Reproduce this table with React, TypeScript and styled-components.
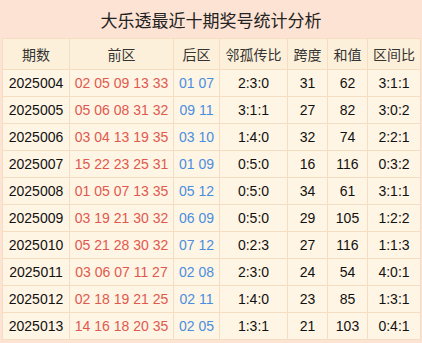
import styled, { createGlobalStyle } from "styled-components";

const GlobalStyle = createGlobalStyle`
  html, body {
    margin: 0;
    padding: 0;
    background: #fff;
  }
  body {
    font-family: "Liberation Sans", "Noto Sans CJK SC", sans-serif;
  }
`;

interface Draw {
  issue: string;
  front: string;
  back: string;
  ratio: string;
  span: number;
  sum: number;
  zone: string;
}

const draws: Draw[] = [
  { issue: "2025004", front: "02 05 09 13 33", back: "01 07", ratio: "2:3:0", span: 31, sum: 62, zone: "3:1:1" },
  { issue: "2025005", front: "05 06 08 31 32", back: "09 11", ratio: "3:1:1", span: 27, sum: 82, zone: "3:0:2" },
  { issue: "2025006", front: "03 04 13 19 35", back: "03 10", ratio: "1:4:0", span: 32, sum: 74, zone: "2:2:1" },
  { issue: "2025007", front: "15 22 23 25 31", back: "01 09", ratio: "0:5:0", span: 16, sum: 116, zone: "0:3:2" },
  { issue: "2025008", front: "01 05 07 13 35", back: "05 12", ratio: "0:5:0", span: 34, sum: 61, zone: "3:1:1" },
  { issue: "2025009", front: "03 19 21 30 32", back: "06 09", ratio: "0:5:0", span: 29, sum: 105, zone: "1:2:2" },
  { issue: "2025010", front: "05 21 28 30 32", back: "07 12", ratio: "0:2:3", span: 27, sum: 116, zone: "1:1:3" },
  { issue: "2025011", front: "03 06 07 11 27", back: "02 08", ratio: "2:3:0", span: 24, sum: 54, zone: "4:0:1" },
  { issue: "2025012", front: "02 18 19 21 25", back: "02 11", ratio: "1:4:0", span: 23, sum: 85, zone: "1:3:1" },
  { issue: "2025013", front: "14 16 18 20 35", back: "02 05", ratio: "1:3:1", span: 21, sum: 103, zone: "0:4:1" },
];

const columns = [
  { label: "期数", width: 67 },
  { label: "前区", width: 104 },
  { label: "后区", width: 46 },
  { label: "邻孤传比", width: 68 },
  { label: "跨度", width: 40 },
  { label: "和值", width: 40 },
  { label: "区间比", width: 53 },
];

const App = () => {
  return (
    <>
      <GlobalStyle />
      <Panel>
        <Title>大乐透最近十期奖号统计分析</Title>
        <Table>
          <colgroup>
            {columns.map((c) => (
              <col key={c.label} style={{ width: c.width }} />
            ))}
          </colgroup>
          <thead>
            <tr>
              {columns.map((c) => (
                <HeadCell key={c.label}>{c.label}</HeadCell>
              ))}
            </tr>
          </thead>
          <tbody>
            {draws.map((d) => (
              <tr key={d.issue}>
                <Cell>{d.issue}</Cell>
                <Cell $tone="red">{d.front}</Cell>
                <Cell $tone="blue">{d.back}</Cell>
                <Cell>{d.ratio}</Cell>
                <Cell>{d.span}</Cell>
                <Cell>{d.sum}</Cell>
                <Cell>{d.zone}</Cell>
              </tr>
            ))}
          </tbody>
        </Table>
      </Panel>
    </>
  );
};

const Panel = styled.div`
  width: 422px;
  height: 343px;
  box-sizing: border-box;
  padding: 0 2px 3px;
  background-color: #fde3d3;
  display: flex;
  flex-direction: column;
`;

const Title = styled.div`
  height: 38px;
  display: flex;
  align-items: center;
  justify-content: center;
  font-family: "Noto Sans CJK SC", sans-serif;
  font-size: 17px;
  color: #222;
`;

const Table = styled.table`
  width: 418px;
  table-layout: fixed;
  border-collapse: collapse;
  background-color: #fff5e4;
`;

const HeadCell = styled.th`
  height: 30px;
  padding: 0;
  border: 1px solid #f6dcc0;
  background-color: #fdf0da;
  font-family: "Noto Sans CJK SC", sans-serif;
  font-size: 14px;
  font-weight: normal;
  color: #333;
  text-align: center;
`;

const Cell = styled.td<{ $tone?: "red" | "blue" }>`
  height: 26px;
  padding: 0;
  border: 1px solid #f6dcc0;
  font-family: "Liberation Sans", sans-serif;
  font-size: 14px;
  text-align: center;
  white-space: nowrap;
  color: ${({ $tone }) =>
    $tone === "red" ? "#e0594f" : $tone === "blue" ? "#4a8ee0" : "#111"};
`;

export default App;
